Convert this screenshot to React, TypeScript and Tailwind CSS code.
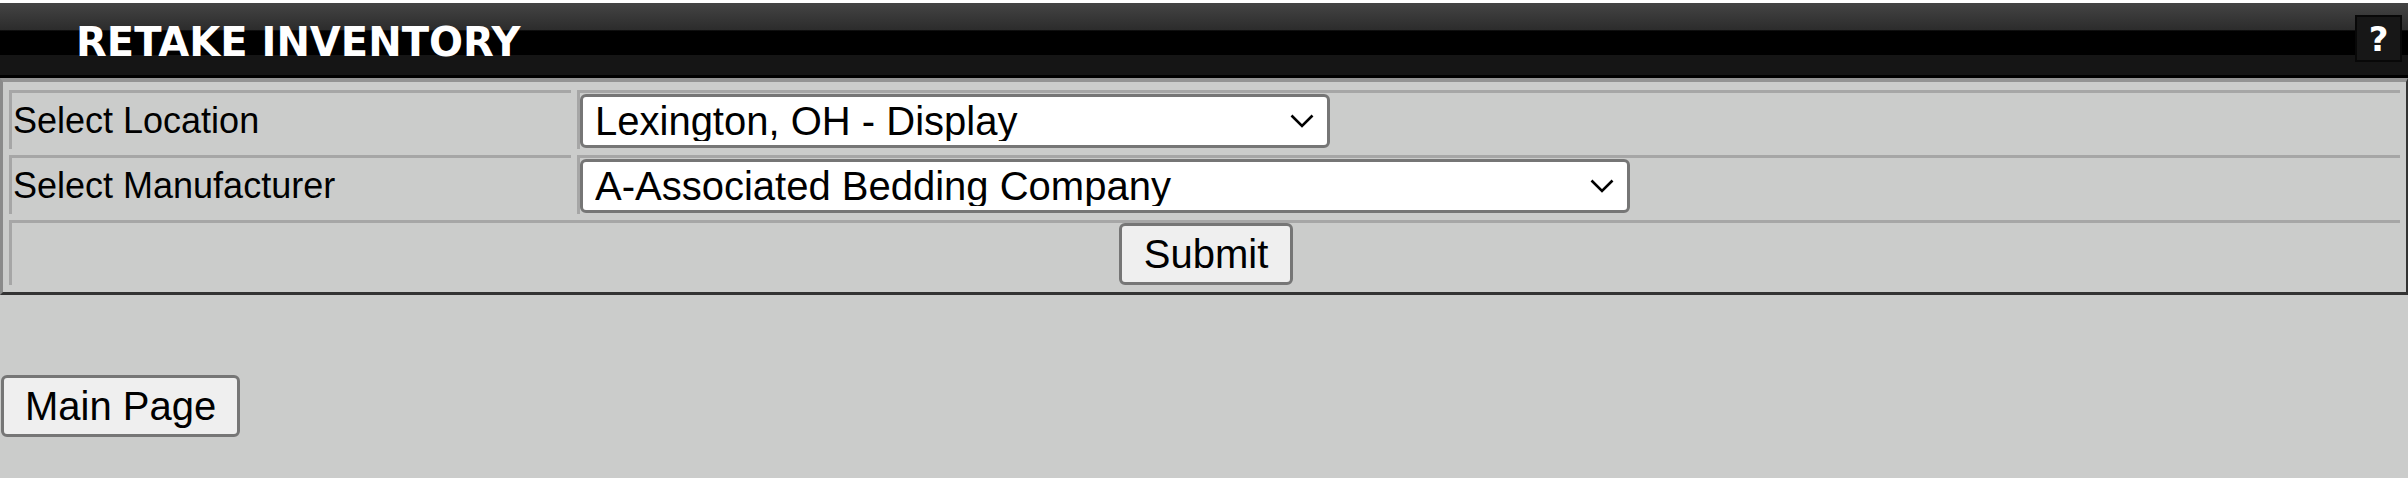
import { useState } from "react";

const locations = [
  "Lexington, OH - Display",
  "Lexington, OH - Warehouse",
  "Mansfield, OH - Display",
];

const manufacturers = [
  "A-Associated Bedding Company",
  "Ashley Furniture",
  "Broyhill",
];

function Chevron() {
  return (
    <svg
      width="24"
      height="14"
      viewBox="0 0 24 14"
      fill="none"
      stroke="#000"
      strokeWidth="2.6"
      className="pointer-events-none absolute right-[16px] top-1/2 -translate-y-1/2"
    >
      <polyline points="1.5,1.5 12,12 22.5,1.5" />
    </svg>
  );
}

type DropdownProps = {
  value: string;
  options: string[];
  className: string;
  onChange: (value: string) => void;
};

function Dropdown({ value, options, className, onChange }: DropdownProps) {
  return (
    <div className={className}>
      <select
        value={value}
        onChange={(e) => onChange(e.target.value)}
        className="h-full w-full appearance-none rounded-[6px] border-[3px] border-[#767676] bg-white pl-[12px] pr-[50px] font-['Liberation_Sans',Arial,sans-serif] text-[40px] leading-none text-black outline-none"
      >
        {options.map((o) => (
          <option key={o}>{o}</option>
        ))}
      </select>
      <Chevron />
    </div>
  );
}

function App() {
  const [location, setLocation] = useState(locations[0]);
  const [manufacturer, setManufacturer] = useState(manufacturers[0]);

  return (
    <div className="flex h-screen flex-col overflow-hidden border-t-[3px] border-white bg-[#cbcccb] font-['Liberation_Sans',Arial,sans-serif] text-black">
      {/* title bar */}
      <div className="flex h-[75px] shrink-0 items-start justify-between bg-[linear-gradient(to_bottom,#444444_0%,#2c2c2c_36%,#000000_37%,#000000_69%,#151515_70%,#151515_96%,#000000_96%)]">
        <h1 className="mt-[16px] pl-[76px] font-['DejaVu_Sans',Verdana,sans-serif] text-[40px] font-bold leading-[46px] text-white">
          RETAKE INVENTORY
        </h1>
        <button className="mr-[6px] mt-[12px] flex h-[47px] w-[47px] items-center justify-center border-2 border-[#080808] bg-[#171717] font-['DejaVu_Sans',Verdana,sans-serif] text-[34px] font-bold leading-none text-white">
          ?
        </button>
      </div>

      {/* form table */}
      <form
        onSubmit={(e) => e.preventDefault()}
        className="shrink-0 border-b-[3px] border-l-[3px] border-r-[2px] border-t-[4px] border-b-[#333333] border-l-[#8a8a8a] border-r-[#333333] border-t-[#939393] pb-[7px] pl-[6px] pr-[6px] pt-[8px]"
      >
        <div className="grid grid-cols-[562px_1fr] gap-x-[6px] gap-y-[6px]">
          <div className="flex items-center border-l-[3px] border-t-[3px] border-[#a6a6a6] pl-[1px] text-[36px]">
            Select Location
          </div>
          <div className="flex items-center border-l-[3px] border-t-[3px] border-[#a6a6a6] py-[1px]">
            <Dropdown
              value={location}
              options={locations}
              onChange={setLocation}
              className="relative h-[54px] w-[750px]"
            />
          </div>

          <div className="flex items-center border-l-[3px] border-t-[3px] border-[#a6a6a6] pl-[1px] text-[36px]">
            Select Manufacturer
          </div>
          <div className="flex items-center border-l-[3px] border-t-[3px] border-[#a6a6a6] py-[1px]">
            <Dropdown
              value={manufacturer}
              options={manufacturers}
              onChange={setManufacturer}
              className="relative h-[54px] w-[1050px]"
            />
          </div>

          <div className="col-span-2 flex justify-center border-l-[3px] border-t-[3px] border-[#a6a6a6]">
            <button
              type="submit"
              className="h-[62px] rounded-[6px] border-[3px] border-[#767676] bg-[#efefef] px-[22px] text-[40px] leading-none"
            >
              Submit
            </button>
          </div>
        </div>
      </form>

      <button className="ml-[1px] mt-[80px] h-[62px] shrink-0 self-start rounded-[6px] border-[3px] border-[#767676] bg-[#efefef] px-[21px] text-[40px] leading-none">
        Main Page
      </button>
    </div>
  );
}

export default App;
